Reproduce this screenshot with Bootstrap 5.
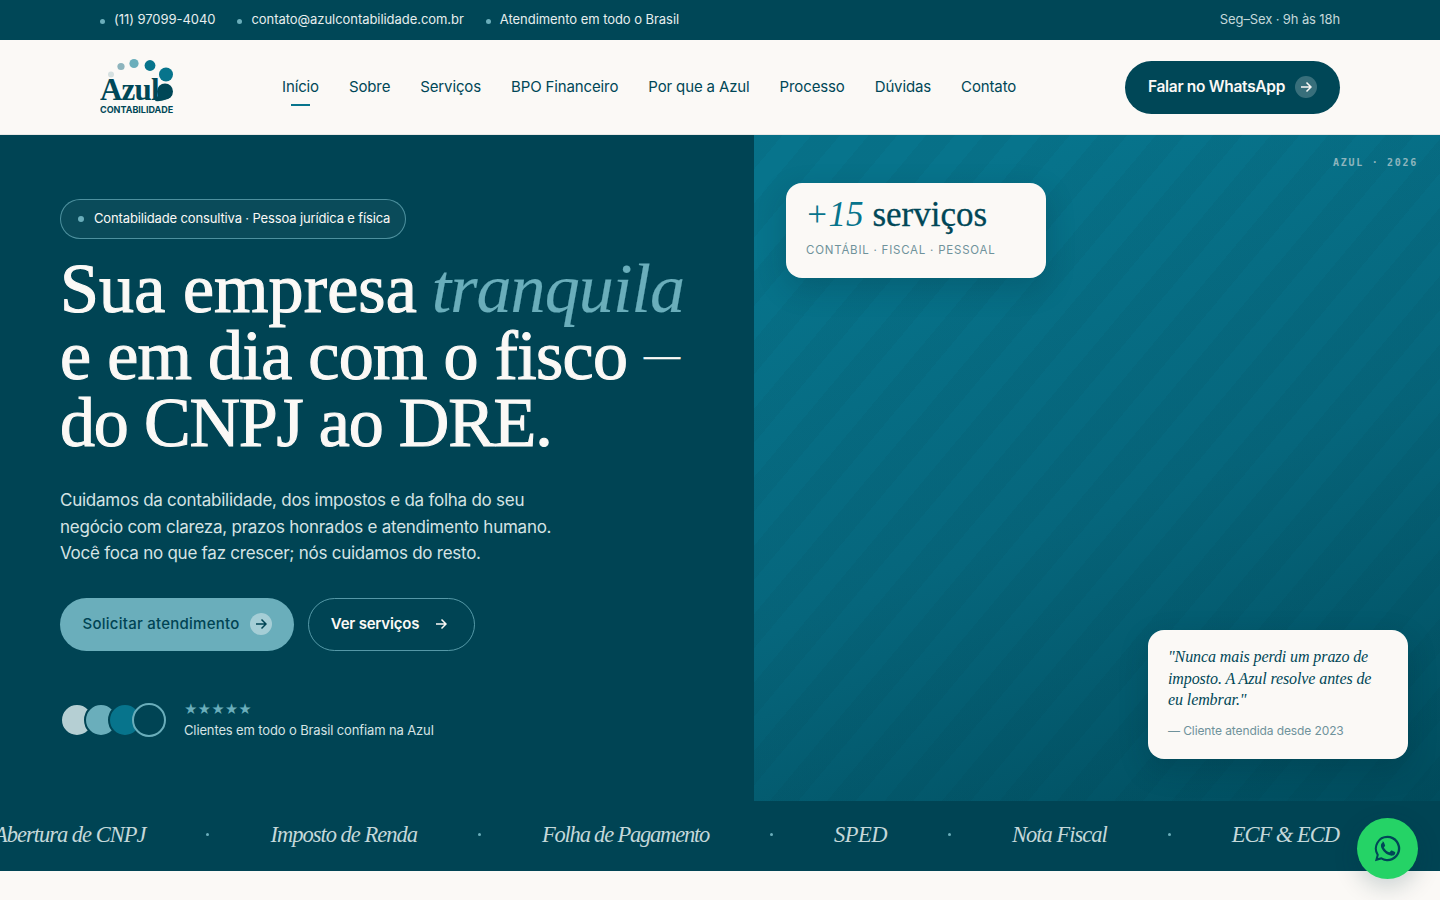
<!DOCTYPE html>
<html lang="pt-BR">
<head>
  <meta charset="UTF-8">
  <meta name="viewport" content="width=device-width, initial-scale=1.0">
  <title>Azul Contabilidade</title>
  <link href="https://cdn.jsdelivr.net/npm/bootstrap@5.3.3/dist/css/bootstrap.min.css" rel="stylesheet">
  <style>
    body {
      background-color: #fbf9f6;
      color: #004757;
      font-family: "Inter", "Liberation Sans", sans-serif;
      overflow: hidden;
      height: 900px;
    }
    .topo {
      height: 40px;
      background-color: #004757;
      padding: 0 100px;
      font-size: 13px;
      letter-spacing: -.05px;
      color: #e6eeee;
    }
    .ponto {
      width: 5px;
      height: 5px;
      border-radius: 50%;
      background-color: #6aaebb;
      display: inline-block;
      margin-right: 9px;
      vertical-align: 0;
    }
    .topo-item { margin-right: 22px; }
    .topo-dir { color: #c4d8da; letter-spacing: -.12px; }
    .menu {
      height: 95px;
      padding: 0 100px;
      border-bottom: 1px solid #e8e8e6;
    }
    .logo-box { width: 182px; }
    .menu-links { gap: 30px; }
    .menu-links a {
      color: #004757;
      text-decoration: none;
      font-size: 15px;
      letter-spacing: -.13px;
      position: relative;
      display: block;
    }
    .menu-links a.ativo::after {
      content: '';
      position: absolute;
      left: 9px;
      right: 9px;
      bottom: -8px;
      height: 2px;
      background: #07748c;
    }
    .btn-zap {
      background-color: #004757;
      color: #fbf9f6;
      height: 53px;
      width: 215px;
      border-radius: 27px;
      font-size: 15.5px;
      font-weight: 600;
      letter-spacing: -.3px;
      gap: 10px;
    }
    .seta {
      width: 22px;
      height: 22px;
      border-radius: 50%;
      background: rgba(255, 255, 255, .22);
    }
    .heroi { height: 666px; }
    .heroi-esq {
      width: 754px;
      background-color: #004454;
      padding: 64px 60px 0;
      color: #fbf9f6;
    }
    .selo {
      height: 40px;
      width: 346px;
      border: 1px solid rgba(106, 174, 187, .7);
      border-radius: 20px;
      background: rgba(255, 255, 255, .04);
      padding-left: 17px;
      font-size: 13px;
      letter-spacing: -.14px;
    }
    .selo .ponto { width: 6px; height: 6px; margin-right: 10px; }
    .titulo {
      font-family: "Liberation Serif", serif;
      font-size: 70px;
      line-height: 67px;
      font-weight: 400;
      letter-spacing: -.7px;
      margin: 16px 0 0;
      white-space: nowrap;
      -webkit-text-stroke: 1.1px #fbf9f6;
    }
    .titulo-a { letter-spacing: .1px; }
    .titulo-c { letter-spacing: -1.2px; }
    .titulo em {
      color: #6aaebb;
      letter-spacing: -.9px;
      margin-left: -2px;
      -webkit-text-stroke: .2px #6aaebb;
    }
    .traco {
      font-size: 36px;
      line-height: 0;
      vertical-align: 12px;
      -webkit-text-stroke: .4px #fbf9f6;
    }
    .texto {
      font-size: 17px;
      line-height: 26.5px;
      letter-spacing: -.25px;
      margin: 31px 0 0;
      color: #d5e3e4;
    }
    .btn-cheio, .btn-linha {
      height: 53px;
      border-radius: 27px;
      font-size: 15px;
    }
    .btn-cheio {
      width: 234px;
      background-color: #6aaebb;
      color: #004454;
      font-weight: 500;
      letter-spacing: .25px;
      gap: 10px;
    }
    .btn-cheio .seta { background: rgba(255, 255, 255, .4); }
    .btn-linha {
      width: 167px;
      border: 1px solid rgba(106, 174, 187, .8);
      color: #fbf9f6;
      font-weight: 600;
      letter-spacing: -.2px;
      padding-right: 5px;
    }
    .acoes { margin-top: 31px; gap: 14px; }
    .prova { margin-top: 50px; gap: 28px; }
    .bola {
      width: 30px;
      height: 30px;
      border-radius: 50%;
      margin-right: -10px;
      border: 2px solid #004454;
      box-sizing: content-box;
    }
    .bola-a { background: #b5cfd3; }
    .bola-b { background: #6aaebb; }
    .bola-c { background: #07748c; }
    .bola-d { background: #004454; border-color: #6aaebb; }
    .estrelas { color: #6aaebb; font-size: 13px; line-height: 16px; }
    .prova-txt { font-size: 13px; letter-spacing: -.13px; color: #d5e3e4; margin-top: 4px; }
    .heroi-dir {
      flex: 1;
      position: relative;
      background:
        repeating-linear-gradient(130deg, rgba(0, 40, 50, .05) 0 22px, rgba(0, 40, 50, 0) 22px 44px),
        linear-gradient(160deg, #07748c 0%, #07748c 12%, #06667c 55%, #004c5d 100%);
    }
    .ano {
      position: absolute;
      top: 20px;
      right: 22px;
      font-family: "DejaVu Sans Mono", monospace;
      font-size: 10px;
      font-weight: 700;
      letter-spacing: 1.7px;
      color: #8fb5bd;
    }
    .caixa-a {
      position: absolute;
      left: 32px;
      top: 48px;
      width: 260px;
      height: 95px;
      background-color: #fbf9f6;
      border-radius: 16px;
      padding: 10px 20px;
      box-shadow: 0 10px 30px rgba(0, 30, 40, .2);
    }
    .caixa-a-num {
      font-family: "Liberation Serif", serif;
      font-size: 35px;
      line-height: 44px;
      margin-left: -1px;
      color: #004757;
      -webkit-text-stroke: .3px #004757;
    }
    .caixa-a-num em { color: #07748c; -webkit-text-stroke: 0; }
    .caixa-a-sub { font-size: 11.5px; letter-spacing: .77px; color: #6f929b; margin-top: 5px; }
    .caixa-b {
      position: absolute;
      right: 32px;
      top: 495px;
      width: 260px;
      height: 129px;
      background-color: #fbf9f6;
      border-radius: 16px;
      padding: 16px 20px;
      box-shadow: 0 10px 30px rgba(0, 30, 40, .2);
    }
    .caixa-b-txt {
      font-family: "Liberation Serif", serif;
      font-style: italic;
      font-size: 16px;
      line-height: 21.5px;
      letter-spacing: -.1px;
      color: #004757;
    }
    .caixa-b-aut { font-size: 12px; letter-spacing: -.1px; color: #6f929b; margin-top: 11px; }
    .faixa {
      height: 70px;
      background-color: #004454;
      font-family: "Liberation Serif", serif;
      font-style: italic;
      font-size: 22.5px;
      letter-spacing: -1px;
      color: #c4d8da;
      white-space: nowrap;
      gap: 61px;
      padding-bottom: 3px;
    }
    .faixa-item:first-child { margin-left: -6px; }
    .faixa-longo { letter-spacing: -1.2px; }
    .faixa-curto { letter-spacing: -.5px; }
    .faixa-sep {
      width: 3px;
      height: 3px;
      border-radius: 50%;
      background-color: #6aaebb;
    }
    .zap {
      position: fixed;
      left: 1357px;
      top: 818px;
      width: 61px;
      height: 61px;
      border-radius: 50%;
      background-color: #25d366;
      box-shadow: 0 8px 24px rgba(0, 50, 60, .2);
    }
  </style>
</head>
<body>
  <div class="topo d-flex align-items-center justify-content-between">
    <div class="d-flex align-items-center">
      <span class="topo-item"><span class="ponto"></span>(11) 97099-4040</span>
      <span class="topo-item"><span class="ponto"></span>contato@azulcontabilidade.com.br</span>
      <span><span class="ponto"></span>Atendimento em todo o Brasil</span>
    </div>
    <div class="topo-dir">Seg–Sex · 9h às 18h</div>
  </div>

  <div class="menu d-flex align-items-center justify-content-between">
    <div class="d-flex align-items-center">
      <div class="logo-box">
        <svg class="d-block" width="76" height="58" viewBox="0 0 76 58">
          <circle cx="11" cy="16.5" r="3" fill="#d5e0e0"/>
          <circle cx="21" cy="8.5" r="3.6" fill="#8db4bd"/>
          <circle cx="34" cy="5.5" r="4.6" fill="#6aaebb"/>
          <circle cx="50" cy="7.5" r="5.4" fill="#07748c"/>
          <circle cx="66" cy="16.5" r="7" fill="#07748c"/>
          <circle cx="65" cy="33.5" r="8" fill="#004757"/>
          <path d="M59 28Q59 38 55 43Q66 44 72 37Z" fill="#004757"/>
          <text x="0" y="42" font-family="Liberation Serif" font-weight="700" font-size="31" fill="#004757" letter-spacing="-.8">Azul</text>
          <text x="0" y="54.5" font-family="Inter" font-weight="700" font-size="9" fill="#004757">CONTABILIDADE</text>
        </svg>
      </div>
      <nav class="menu-links d-flex">
        <a class="ativo" href="#">Início</a>
        <a href="#">Sobre</a>
        <a href="#">Serviços</a>
        <a href="#">BPO Financeiro</a>
        <a href="#">Por que a Azul</a>
        <a href="#">Processo</a>
        <a href="#">Dúvidas</a>
        <a href="#">Contato</a>
      </nav>
    </div>
    <div class="btn-zap d-flex align-items-center justify-content-center">
      Falar no WhatsApp
      <span class="seta d-flex align-items-center justify-content-center">
        <svg width="12" height="12" viewBox="0 0 12 12" fill="none" stroke="#fbf9f6" stroke-width="1.5"><path d="M1 6h10M6.5 1.5 11 6l-4.5 4.5"/></svg>
      </span>
    </div>
  </div>

  <section class="heroi d-flex">
    <div class="heroi-esq">
      <div class="selo d-flex align-items-center"><span class="ponto"></span>Contabilidade consultiva · Pessoa jurídica e física</div>
      <h1 class="titulo"><span class="titulo-a">Sua empresa</span> <em>tranquila</em><br>e em dia com o fisco <span class="traco">—</span><br><span class="titulo-c">do CNPJ ao DRE.</span></h1>
      <p class="texto">Cuidamos da contabilidade, dos impostos e da folha do seu<br>negócio com clareza, prazos honrados e atendimento humano.<br>Você foca no que faz crescer; nós cuidamos do resto.</p>
      <div class="acoes d-flex">
        <div class="btn-cheio d-flex align-items-center justify-content-center">
          Solicitar atendimento
          <span class="seta d-flex align-items-center justify-content-center">
            <svg width="12" height="12" viewBox="0 0 12 12" fill="none" stroke="#004454" stroke-width="1.5"><path d="M1 6h10M6.5 1.5 11 6l-4.5 4.5"/></svg>
          </span>
        </div>
        <div class="btn-linha d-flex align-items-center justify-content-center gap-3">
          Ver serviços
          <svg width="12" height="12" viewBox="0 0 12 12" fill="none" stroke="#fbf9f6" stroke-width="1.5"><path d="M1 6h10M6.5 1.5 11 6l-4.5 4.5"/></svg>
        </div>
      </div>
      <div class="prova d-flex align-items-center">
        <div class="d-flex">
          <span class="bola bola-a"></span>
          <span class="bola bola-b"></span>
          <span class="bola bola-c"></span>
          <span class="bola bola-d"></span>
        </div>
        <div>
          <div class="estrelas">★★★★★</div>
          <div class="prova-txt">Clientes em todo o Brasil confiam na Azul</div>
        </div>
      </div>
    </div>
    <div class="heroi-dir">
      <div class="ano">AZUL · 2026</div>
      <div class="caixa-a">
        <div class="caixa-a-num"><em>+15</em> serviços</div>
        <div class="caixa-a-sub">CONTÁBIL · FISCAL · PESSOAL</div>
      </div>
      <div class="caixa-b">
        <div class="caixa-b-txt">"Nunca mais perdi um prazo de imposto. A Azul resolve antes de eu lembrar."</div>
        <div class="caixa-b-aut">— Cliente atendida desde 2023</div>
      </div>
    </div>
  </section>

  <div class="faixa d-flex align-items-center">
    <span class="faixa-item">Abertura de CNPJ</span>
    <span class="faixa-sep"></span>
    <span class="faixa-item">Imposto de Renda</span>
    <span class="faixa-sep"></span>
    <span class="faixa-item faixa-longo">Folha de Pagamento</span>
    <span class="faixa-sep"></span>
    <span class="faixa-item faixa-curto">SPED</span>
    <span class="faixa-sep"></span>
    <span class="faixa-item">Nota Fiscal</span>
    <span class="faixa-sep"></span>
    <span class="faixa-item">ECF &amp; ECD</span>
  </div>

  <div class="zap d-flex align-items-center justify-content-center">
    <svg width="31" height="31" viewBox="0 0 24 24" fill="#004757"><path d="M12 2.2A9.8 9.8 0 0 0 3.6 17L2.3 21.8l4.9-1.3A9.8 9.8 0 1 0 12 2.2zm0 1.7a8.1 8.1 0 1 1-4.3 15l-.4-.2-2.7.7.7-2.6-.2-.4A8.1 8.1 0 0 1 12 3.9zM8.6 7.3c-.2 0-.5.1-.7.3-.3.3-1 1-1 2.3s1 2.7 1.1 2.8c.1.2 1.9 3 4.7 4.1 2.3.9 2.8.7 3.3.7s1.6-.7 1.8-1.3c.2-.6.2-1.2.2-1.3-.1-.1-.3-.2-.6-.3l-2-1c-.3-.1-.5-.1-.7.1l-.9 1.1c-.2.2-.3.2-.6.1-.3-.2-1.2-.5-2.3-1.4-.9-.8-1.4-1.7-1.6-2-.2-.3 0-.4.1-.6l.4-.5c.2-.2.2-.3.3-.5.1-.2 0-.4 0-.5l-.9-2.2c-.2-.5-.4-.5-.6-.5h-1z"/></svg>
  </div>
</body>
</html>
